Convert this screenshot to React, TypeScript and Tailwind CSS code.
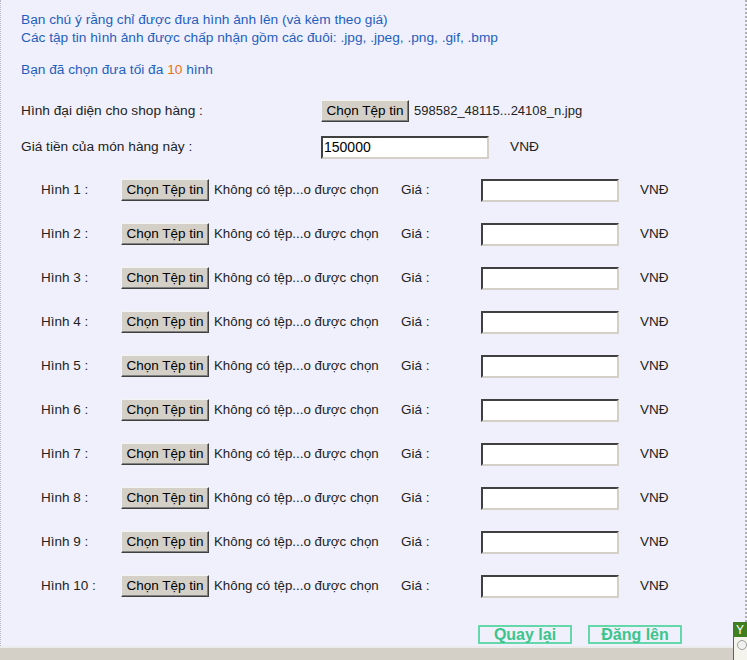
import React from "react";

const font = { fontFamily: '"Liberation Sans", Arial, sans-serif' };

function FileButton() {
  return (
    <button
      type="button"
      className="h-[22px] w-[88px] shrink-0 bg-[#d4d0c8] text-[13.5px] text-black leading-none border border-t-[#f4f4f0] border-l-[#f4f4f0] border-r-[#404040] border-b-[#404040] shadow-[inset_-1px_-1px_0_#808080]"
    >
      Chọn Tệp tin
    </button>
  );
}

function PriceInput({ width, value }: { width: string; value?: string }) {
  return (
    <div
      className={`${width} h-[23px] shrink-0 bg-white border-2 border-t-[#404040] border-l-[#404040] border-r-[#d4d0c8] border-b-[#d4d0c8] text-[14px] leading-[19px] px-[1px] text-black`}
    >
      {value}
    </div>
  );
}

function ImageRow({ n }: { n: number }) {
  return (
    <div className="h-[44px] flex items-center pl-[40px] text-[13.5px] text-[#222]">
      <span className="w-[80px] shrink-0">Hình {n} :</span>
      <FileButton />
      <span className="w-[192px] shrink-0 pl-[5px] whitespace-nowrap text-[13.3px]">Không có tệp...o được chọn</span>
      <span className="w-[80px] shrink-0">Giá :</span>
      <PriceInput width="w-[138px]" />
      <span className="pl-[21px]">VNĐ</span>
    </div>
  );
}

export default function App() {
  return (
    <div className="relative w-[747px] h-[660px] overflow-hidden bg-[#d4d0c8]" style={font}>
      <div className="h-[646px] bg-[#f0f0fc] border-l border-r-2 border-dotted border-l-[#b8b8c8] border-r-[#b0b0b0] flex flex-col">
        <div className="pl-[20px] pt-[11px] text-[13.7px] leading-[18px] text-[#1f5fbf]">
          <p>Bạn chú ý rằng chỉ được đưa hình ảnh lên (và kèm theo giá)</p>
          <p>Các tập tin hình ảnh được chấp nhận gồm các đuôi: .jpg, .jpeg, .png, .gif, .bmp</p>
          <p className="mt-[14px]">
            Bạn đã chọn đưa tối đa <span className="text-[#e8701c]">10</span> hình
          </p>
        </div>

        <div className="mt-[18px] h-[28px] flex items-center pl-[20px] text-[13.7px] text-[#222]">
          <span className="w-[300px] shrink-0">Hình đại diện cho shop hàng :</span>
          <FileButton />
          <span className="pl-[5px] whitespace-nowrap text-[13px]">598582_48115...24108_n.jpg</span>
        </div>
        <div className="mt-[8px] h-[28px] flex items-center pl-[20px] text-[13.7px] text-[#222]">
          <span className="w-[300px] shrink-0">Giá tiền của món hàng này :</span>
          <PriceInput width="w-[168px]" value="150000" />
          <span className="pl-[21px]">VNĐ</span>
        </div>

        <div className="mt-[7px] flex flex-col">
          {[1, 2, 3, 4, 5, 6, 7, 8, 9, 10].map((n) => (
            <ImageRow key={n} n={n} />
          ))}
        </div>

        <div className="mt-[17px] flex pl-[477px] gap-[16px]">
          <button
            type="button"
            className="w-[94px] h-[19px] border-2 border-[#64d8a8] text-[#3cc48c] font-bold text-[16px] leading-none"
          >
            Quay lại
          </button>
          <button
            type="button"
            className="w-[94px] h-[19px] border-2 border-[#64d8a8] text-[#3cc48c] font-bold text-[16px] leading-none"
          >
            Đăng lên
          </button>
        </div>
      </div>
      <div className="h-[2px] bg-[#ececec]" />

      {/* corner widget overlapping the edge */}
      <div className="absolute left-[733px] top-[622px] w-[30px] h-[40px] border border-[#3c7c28] bg-[#f4f4ec]">
        <div className="h-[14px] bg-[#3f7f1f] text-white text-[12px] leading-[14px] pl-[2px]">Y</div>
        <div className="mt-[3px] ml-[3px] w-[10px] h-[10px] rounded-full border border-[#a0a0a0] bg-[#f0f0f0]" />
      </div>
    </div>
  );
}
